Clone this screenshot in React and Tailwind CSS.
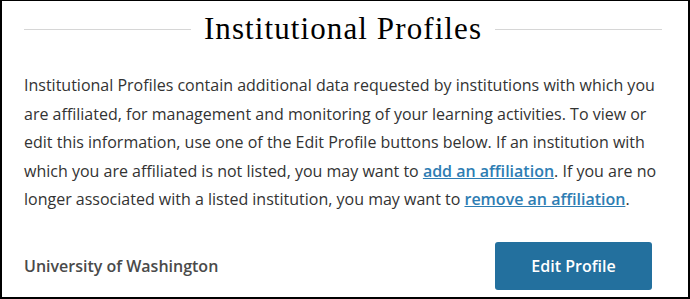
export default function App() {
  return (
    <div className="w-[690px] h-[299px] bg-white border-l-2 border-t border-r-2 border-b-2 border-black pl-[22px] pr-[26px] pt-2 box-border overflow-hidden" style={{ fontFamily: '"Open Sans", sans-serif' }}>
      <div className="flex items-center h-10">
        <div className="flex-1 h-px bg-[#d6d6d6] mt-[1px]"></div>
        <h1 className="px-[13px] text-[31px] tracking-[1.1px] leading-10 text-black" style={{ fontFamily: '"Liberation Serif", serif' }}>
          Institutional Profiles
        </h1>
        <div className="flex-1 h-px bg-[#d6d6d6] mt-[1px]"></div>
      </div>
      <p className="mt-[22px] text-[16px] leading-[28.5px] text-[#333333] whitespace-nowrap">
        Institutional Profiles contain additional data requested by institutions with which you<br />
        are affiliated, for management and monitoring of your learning activities. To view or<br />
        edit this information, use one of the Edit Profile buttons below. If an institution with<br />
        which you are affiliated is not listed, you may want to{" "}
        <a href="#" className="font-semibold text-[#2e7db3] underline">add an affiliation</a>. If you are no<br />
        longer associated with a listed institution, you may want to{" "}
        <a href="#" className="font-semibold text-[#2e7db3] underline">remove an affiliation</a>.
      </p>
      <div className="flex items-center justify-between mt-[28px] pr-[10px]">
        <span className="text-[16px] font-semibold text-[#4a4a4a]">University of Washington</span>
        <button className="w-[157px] h-12 rounded-[3px] bg-[#23709e] text-white text-[16px] font-semibold">Edit Profile</button>
      </div>
    </div>
  );
}
